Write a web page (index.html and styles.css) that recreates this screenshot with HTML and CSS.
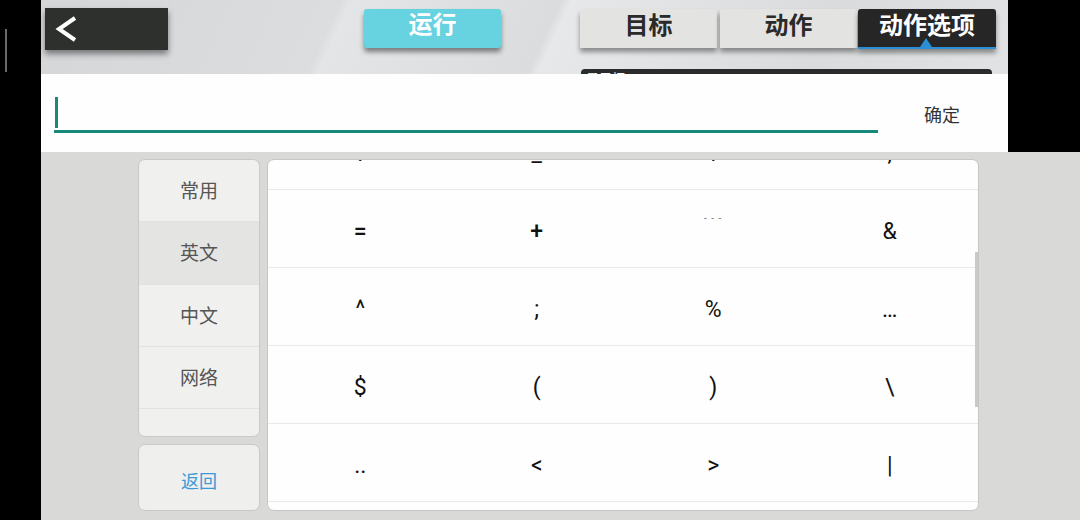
FILE: index.html
```html
<!DOCTYPE html>
<html>
  <head>
    <meta charset="utf-8" />
    <meta name="viewport" content="width=device-width, initial-scale=1" />
    <title>动作选项</title>
    <link rel="stylesheet" href="styles.css">
  </head>

  <body>
    <div class="app">
      <div class="edge"><span class="edge-line"></span></div>

      <div class="main">
        <div class="top">
          <div class="toolbar">
            <button class="back-btn">
              <svg width="28" height="28" viewBox="0 0 28 28">
                <path d="M22 3 L6 14 L22 25" fill="none" stroke="#fff" stroke-width="4" stroke-linejoin="miter" />
              </svg>
            </button>
            <button class="run-btn">运行</button>
            <div class="tab-group">
              <div class="tabs">
                <div class="tab">目标</div>
                <div class="tab tab-mid">动作</div>
                <div class="tab tab-active">动作选项<span class="tab-arrow"></span></div>
              </div>
              <div class="display-bar">显示框</div>
            </div>
          </div>

          <div class="input-row">
            <div class="field"><span class="cursor"></span></div>
            <div class="ok">确定</div>
          </div>
        </div>

        <div class="lower">
          <div class="side">
            <div class="cats">
              <div class="cat">常用</div>
              <div class="cat cat-on">英文</div>
              <div class="cat">中文</div>
              <div class="cat">网络</div>
            </div>
            <div class="back-card">返回</div>
          </div>

          <div class="keys-wrap">
            <div class="keys" id="keys">
              <div class="key-row"><span>!</span><span>@</span><span>#</span><span>?</span></div>
              <div class="key-row"><span>~</span><span>*</span><span>'</span><span>`</span></div>
              <div class="key-row"><span>.</span><span>_</span><span>:</span><span>,</span></div>
              <div class="key-row"><span class="bold">=</span><span class="bold">+</span><span class="dash">- - -</span><span>&amp;</span></div>
              <div class="key-row"><span>^</span><span>;</span><span>%</span><span>…</span></div>
              <div class="key-row"><span>$</span><span>(</span><span>)</span><span>\</span></div>
              <div class="key-row"><span>..</span><span>&lt;</span><span>&gt;</span><span>|</span></div>
              <div class="key-row"><span>[</span><span>]</span><span>{</span><span>}</span></div>
              <div class="key-row"><span>·</span><span>×</span><span>÷</span><span>¥</span></div>
              <div class="key-row"><span>【</span><span>】</span><span>《</span><span>》</span></div>
            </div>
            <div class="scroll-thumb"></div>
          </div>
        </div>
      </div>
    </div>
    <script>
      document.getElementById("keys").scrollTop = 204;
    </script>
  </body>
</html>
```

FILE: styles.css
```css
html,
body {
  margin: 0;
  padding: 0;
  background: #000;
  font-family: "Noto Sans CJK SC", "Noto Sans", sans-serif;
}
.app {
  display: flex;
  width: 1080px;
  height: 520px;
  overflow: hidden;
}
.edge {
  width: 41px;
  flex: none;
  background: #000;
  padding: 29px 0 0 5px;
  box-sizing: border-box;
}
.edge-line {
  display: block;
  width: 2px;
  height: 43px;
  background: #6a6a6a;
}
.main {
  flex: 1;
  display: flex;
  flex-direction: column;
}
.top {
  width: 967px;
  height: 152px;
}
.toolbar {
  height: 74px;
  display: flex;
  align-items: flex-start;
  padding-top: 8px;
  box-sizing: border-box;
  background: linear-gradient(115deg, #d4d6d8 0%, #dcdddf 30%, #e4e5e6 31%, #dadcdd 52%, #e7e8e9 53%, #d9dbdc 80%, #e1e2e3 100%);
}
button {
  border: none;
  outline: none;
  margin: 0;
  padding: 0;
  cursor: pointer;
  font-family: inherit;
}
.back-btn {
  width: 123px;
  height: 42px;
  margin-left: 4px;
  background: #2e302d;
  box-shadow: 0 4px 6px rgba(0, 0, 0, 0.45);
  display: flex;
  align-items: center;
  padding-left: 8px;
}
.run-btn {
  width: 137px;
  height: 39px;
  margin-left: 196px;
  margin-top: 1px;
  background: #67d2e0;
  color: #fff;
  font-size: 24px;
  font-weight: bold;
  line-height: 28px;
  border-radius: 3px;
  box-shadow: 0 4px 5px rgba(0, 0, 0, 0.45);
  padding-bottom: 11px;
}
.tab-group {
  margin-left: 79px;
  margin-top: 1px;
  display: flex;
  flex-direction: column;
}
.tabs {
  display: flex;
}
.tab {
  width: 137px;
  height: 39px;
  background: #e3e3e2;
  color: #2a2a2a;
  font-size: 24px;
  font-weight: bold;
  text-align: center;
  line-height: 30px;
  border-radius: 3px 3px 0 0;
  box-shadow: 0 4px 5px rgba(0, 0, 0, 0.4);
  position: relative;
}
.tab-mid {
  margin-left: 3px;
}
.tab-active {
  width: 138px;
  margin-left: 1px;
  background: #262626;
  color: #fff;
  border-bottom: 2px solid #2a8fd6;
  box-sizing: border-box;
  height: 40px;
}
.tab-arrow {
  position: absolute;
  left: 62px;
  bottom: 0;
  width: 0;
  height: 0;
  border-left: 6px solid transparent;
  border-right: 6px solid transparent;
  border-bottom: 9px solid #2a8fd6;
}
.display-bar {
  margin-left: 1px;
  margin-top: 20px;
  width: 411px;
  height: 5px;
  overflow: hidden;
  background: #2b2b2b;
  border-radius: 4px 4px 0 0;
  color: #fff;
  font-size: 13px;
  line-height: 13px;
  padding: 2px 0 0 5px;
  box-sizing: border-box;
}
.input-row {
  height: 78px;
  background: #fdfefd;
  display: flex;
  align-items: flex-start;
}
.field {
  width: 824px;
  height: 36px;
  margin-left: 13px;
  margin-top: 23px;
  border-bottom: 3px solid #158a7b;
  box-sizing: border-box;
  display: flex;
}
.cursor {
  width: 3px;
  height: 31px;
  margin-left: 1px;
  background: #158a7b;
}
.ok {
  margin-left: 46px;
  margin-top: 27px;
  font-size: 18px;
  line-height: 26px;
  color: #333;
}
.lower {
  flex: 1;
  background: #d9dad8;
  display: flex;
  padding: 7px 0 0 97px;
  gap: 7px;
}
.side {
  width: 122px;
  display: flex;
  flex-direction: column;
  gap: 7px;
}
.cats {
  height: 278px;
  background: #f0f0ef;
  border: 1px solid #c9cac8;
  border-radius: 7px;
  box-sizing: border-box;
  overflow: hidden;
}
.cat {
  height: 62px;
  border-bottom: 1px solid #e2e2e1;
  box-sizing: border-box;
  text-align: center;
  line-height: 60px;
  font-size: 19px;
  color: #555;
}
.cat-on {
  background: #e4e4e3;
  height: 63px;
}
.back-card {
  height: 67px;
  background: #efefee;
  border: 1px solid #c9cac8;
  border-radius: 7px;
  box-sizing: border-box;
  text-align: center;
  line-height: 70px;
  font-size: 18px;
  color: #3a9ad6;
}
.keys-wrap {
  position: relative;
  width: 712px;
  height: 352px;
}
.keys {
  height: 100%;
  background: #fdfefd;
  border: 1px solid #c6c7c5;
  border-radius: 7px;
  box-sizing: border-box;
  overflow: hidden;
}
.scroll-thumb {
  position: absolute;
  right: 1px;
  top: 93px;
  width: 3px;
  height: 155px;
  background: #c9cac8;
}
.key-row {
  height: 78px;
  display: grid;
  grid-template-columns: repeat(4, 1fr);
  padding-left: 4px;
  border-bottom: 1px solid #e9e9e8;
  box-sizing: border-box;
}
.key-row span {
  display: flex;
  align-items: center;
  justify-content: center;
  padding-top: 5px;
  font-family: Roboto, "Noto Sans", "Noto Sans CJK SC", sans-serif;
  font-size: 23px;
  color: #111;
}
.key-row .bold {
  font-weight: 500;
}
.key-row .dash {
  font-size: 10px;
  color: #777;
  padding: 0 0 20px;
  letter-spacing: 1px;
}
```
